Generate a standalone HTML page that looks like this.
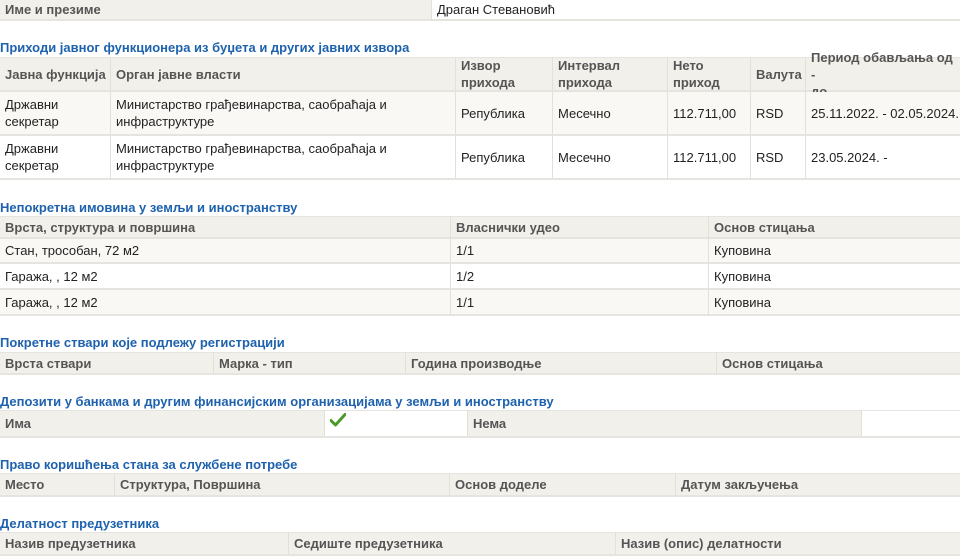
<!DOCTYPE html>
<html><head><meta charset="utf-8"><style>
body{margin:0;width:960px;height:560px;overflow:hidden;background:#fff;font-family:"Liberation Sans",Arial,sans-serif;font-size:13px;color:#222;position:relative}
.c{position:absolute;box-sizing:border-box;border-right:1px solid #e2e0d9;border-bottom:2px solid #e6e4de;padding-left:5px;display:flex;align-items:center;line-height:17px}
.h{background:#f2f0ea;color:#555;font-weight:bold}
.a{background:#f9f8f5}
.w{background:#fff}
.t{position:absolute;left:0;color:#1e62ae;font-weight:bold;font-size:13px}
</style></head><body>
<div class="c h" style="left:0;top:0;width:432px;height:21px">Име и презиме</div>
<div class="c w" style="left:432px;top:0;width:528px;height:21px;border-right:0;color:#222">Драган Стевановић</div>

<div class="t" style="top:40px">Приходи јавног функционера из буџета и других јавних извора</div>
<div class="c h" style="left:0;top:57px;width:111px;height:35px;border-top:1px solid #e6e4de">Јавна функција</div>
<div class="c h" style="left:111px;top:57px;width:345px;height:35px;border-top:1px solid #e6e4de">Орган јавне власти</div>
<div class="c h" style="left:456px;top:57px;width:97px;height:35px;border-top:1px solid #e6e4de">Извор<br>прихода</div>
<div class="c h" style="left:553px;top:57px;width:115px;height:35px;border-top:1px solid #e6e4de">Интервал<br>прихода</div>
<div class="c h" style="left:668px;top:57px;width:83px;height:35px;border-top:1px solid #e6e4de">Нето<br>приход</div>
<div class="c h" style="left:751px;top:57px;width:55px;height:35px;border-top:1px solid #e6e4de">Валута</div>
<div class="c h" style="left:806px;top:57px;width:154px;height:35px;border-top:1px solid #e6e4de;border-right:0">Период обављања од -<br>до</div>

<div class="c a" style="left:0;top:92px;width:111px;height:44px">Државни<br>секретар</div>
<div class="c a" style="left:111px;top:92px;width:345px;height:44px">Министарство грађевинарства, саобраћаја и<br>инфраструктуре</div>
<div class="c a" style="left:456px;top:92px;width:97px;height:44px">Република</div>
<div class="c a" style="left:553px;top:92px;width:115px;height:44px">Месечно</div>
<div class="c a" style="left:668px;top:92px;width:83px;height:44px">112.711,00</div>
<div class="c a" style="left:751px;top:92px;width:55px;height:44px">RSD</div>
<div class="c a" style="left:806px;top:92px;width:154px;height:44px;border-right:0">25.11.2022. - 02.05.2024.</div>

<div class="c w" style="left:0;top:136px;width:111px;height:44px">Државни<br>секретар</div>
<div class="c w" style="left:111px;top:136px;width:345px;height:44px">Министарство грађевинарства, саобраћаја и<br>инфраструктуре</div>
<div class="c w" style="left:456px;top:136px;width:97px;height:44px">Република</div>
<div class="c w" style="left:553px;top:136px;width:115px;height:44px">Месечно</div>
<div class="c w" style="left:668px;top:136px;width:83px;height:44px">112.711,00</div>
<div class="c w" style="left:751px;top:136px;width:55px;height:44px">RSD</div>
<div class="c w" style="left:806px;top:136px;width:154px;height:44px;border-right:0">23.05.2024. -</div>

<div class="t" style="top:200px">Непокретна имовина у земљи и иностранству</div>
<div class="c h" style="left:0;top:216px;width:451px;height:23px;border-top:1px solid #e6e4de">Врста, структура и површина</div>
<div class="c h" style="left:451px;top:216px;width:258px;height:23px;border-top:1px solid #e6e4de">Власнички удео</div>
<div class="c h" style="left:709px;top:216px;width:251px;height:23px;border-top:1px solid #e6e4de;border-right:0">Основ стицања</div>
<div class="c a" style="left:0;top:239px;width:451px;height:25px">Стан, трособан, 72 м2</div>
<div class="c a" style="left:451px;top:239px;width:258px;height:25px">1/1</div>
<div class="c a" style="left:709px;top:239px;width:251px;height:25px;border-right:0">Куповина</div>
<div class="c w" style="left:0;top:264px;width:451px;height:26px">Гаража, , 12 м2</div>
<div class="c w" style="left:451px;top:264px;width:258px;height:26px">1/2</div>
<div class="c w" style="left:709px;top:264px;width:251px;height:26px;border-right:0">Куповина</div>
<div class="c a" style="left:0;top:290px;width:451px;height:26px">Гаража, , 12 м2</div>
<div class="c a" style="left:451px;top:290px;width:258px;height:26px">1/1</div>
<div class="c a" style="left:709px;top:290px;width:251px;height:26px;border-right:0">Куповина</div>

<div class="t" style="top:335px">Покретне ствари које подлежу регистрацији</div>
<div class="c h" style="left:0;top:352px;width:214px;height:23px;border-top:1px solid #e6e4de">Врста ствари</div>
<div class="c h" style="left:214px;top:352px;width:192px;height:23px;border-top:1px solid #e6e4de">Марка - тип</div>
<div class="c h" style="left:406px;top:352px;width:311px;height:23px;border-top:1px solid #e6e4de">Година производње</div>
<div class="c h" style="left:717px;top:352px;width:243px;height:23px;border-top:1px solid #e6e4de;border-right:0">Основ стицања</div>

<div class="t" style="top:394px">Депозити у банкама и другим финансијским организацијама у земљи и иностранству</div>
<div class="c h" style="left:0;top:410px;width:325px;height:28px;border-top:1px solid #e6e4de">Има</div>
<div class="c w" style="left:325px;top:410px;width:143px;height:28px;border-top:1px solid #e6e4de;align-items:flex-start;padding-top:2px"><svg width="16" height="14" viewBox="0 0 16 14"><path d="M1 7.5 L5.5 12 L15 1.5" fill="none" stroke="#4a9a2a" stroke-width="3" stroke-linecap="round" stroke-linejoin="round"/></svg></div>
<div class="c h" style="left:468px;top:410px;width:394px;height:28px;border-top:1px solid #e6e4de">Нема</div>
<div class="c w" style="left:862px;top:410px;width:98px;height:28px;border-top:1px solid #e6e4de;border-right:0"></div>

<div class="t" style="top:457px">Право коришћења стана за службене потребе</div>
<div class="c h" style="left:0;top:473px;width:115px;height:24px;border-top:1px solid #e6e4de">Место</div>
<div class="c h" style="left:115px;top:473px;width:335px;height:24px;border-top:1px solid #e6e4de">Структура, Површина</div>
<div class="c h" style="left:450px;top:473px;width:226px;height:24px;border-top:1px solid #e6e4de">Основ доделе</div>
<div class="c h" style="left:676px;top:473px;width:284px;height:24px;border-top:1px solid #e6e4de;border-right:0">Датум закључења</div>

<div class="t" style="top:516px">Делатност предузетника</div>
<div class="c h" style="left:0;top:532px;width:289px;height:24px;border-top:1px solid #e6e4de">Назив предузетника</div>
<div class="c h" style="left:289px;top:532px;width:327px;height:24px;border-top:1px solid #e6e4de">Седиште предузетника</div>
<div class="c h" style="left:616px;top:532px;width:344px;height:24px;border-top:1px solid #e6e4de;border-right:0">Назив (опис) делатности</div>
</body></html>
